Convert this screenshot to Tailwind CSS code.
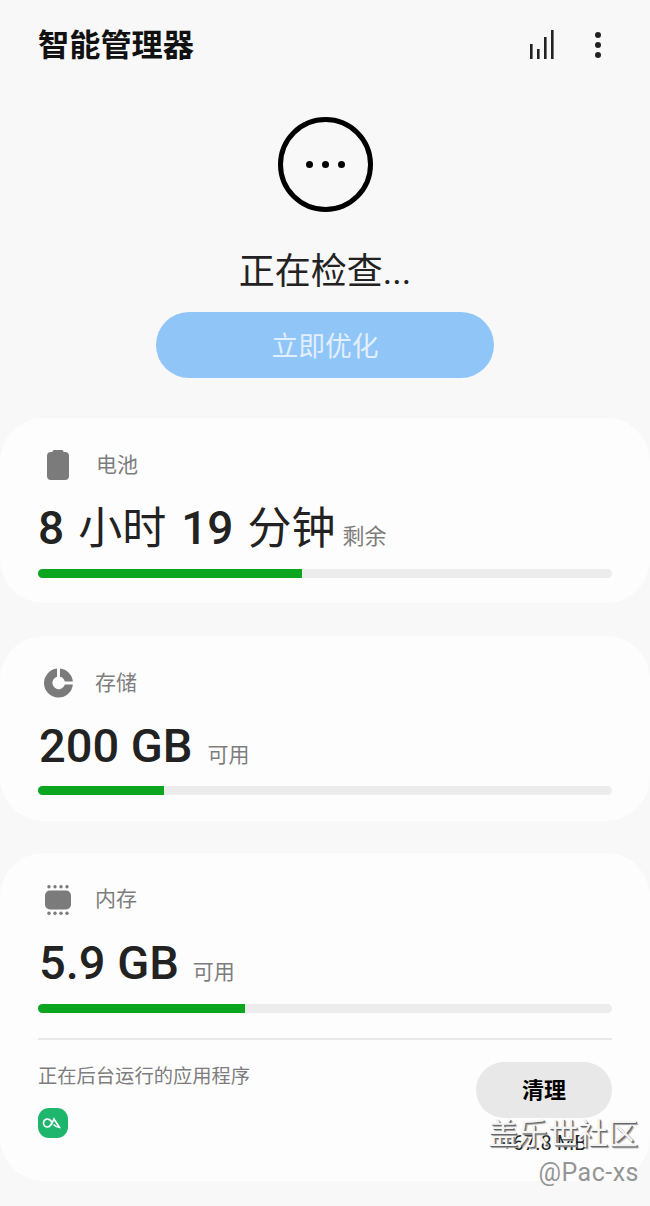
<!DOCTYPE html>
<html lang="zh-CN">
<head>
    <meta charset="UTF-8">
    <meta name="viewport" content="width=device-width, initial-scale=1.0">
    <title>智能管理器</title>
    <script src="https://cdn.jsdelivr.net/npm/@tailwindcss/browser@4"></script>
</head>
<body class="bg-[#f8f8f8] font-['Roboto','Noto_Sans_CJK_SC',sans-serif]">
    <div class="relative h-[1206px] w-[650px] overflow-hidden">
        <!-- Header -->
        <div class="flex h-[90px] items-start justify-between pl-[38px] pr-[47px] pt-[24px]">
            <h1 class="text-[31.2px] leading-[44px] font-bold text-[#111]">智能管理器</h1>
            <div class="flex items-start gap-[39px] pt-[6px]">
                <svg class="h-[30px] w-[26px]" viewBox="0 0 26 30" fill="#222">
                    <rect x="2" y="14" width="2.6" height="15"/>
                    <rect x="9" y="19" width="2.6" height="10"/>
                    <rect x="16" y="7" width="2.6" height="22"/>
                    <rect x="23" y="0" width="2.6" height="29"/>
                </svg>
                <svg class="h-[30px] w-[10px]" viewBox="0 0 10 30" fill="#222">
                    <circle cx="5" cy="5" r="3"/>
                    <circle cx="5" cy="15" r="3"/>
                    <circle cx="5" cy="25" r="3"/>
                </svg>
            </div>
        </div>

        <!-- Status -->
        <div class="flex flex-col items-center">
            <div class="mt-[27px] flex h-[95px] w-[95px] items-center justify-center gap-[9px] rounded-full border-[5px] border-black">
                <span class="h-[7px] w-[7px] rounded-full bg-black"></span>
                <span class="h-[7px] w-[7px] rounded-full bg-black"></span>
                <span class="h-[7px] w-[7px] rounded-full bg-black"></span>
            </div>
            <p class="mt-[35px] text-[36px] leading-[50px] text-[#222]">正在检查...</p>
            <button class="mt-[15px] h-[66px] w-[338px] rounded-full bg-[#90c5f8] pt-[5px] text-[26.8px] text-[#e2effd]">立即优化</button>
        </div>

        <!-- Cards -->
        <div class="mt-[40px] flex flex-col">
            <section class="mb-[33px] h-[185px] rounded-[44px] bg-[#fdfdfd] px-[38px] pt-[31px]">
                <div class="flex h-[32px] items-center">
                    <svg class="ml-[9px] h-[30px] w-[22px]" viewBox="0 0 22 30" fill="#7b7b7b">
                        <path d="M7 0h8a1.500 1.500 0 0 1 1.500 1.500V2H18a4 4 0 0 1 4 4v20a4 4 0 0 1-4 4H4a4 4 0 0 1-4-4V6a4 4 0 0 1 4-4h1.500v-.5A1.500 1.500 0 0 1 7 0z"/>
                    </svg>
                    <span class="ml-[27px] pt-[2px] text-[21px] text-[#7d7d7d]">电池</span>
                </div>
                <div class="mt-[13px] flex h-[50px] items-baseline text-[#222]">
                    <span class="text-[46px] font-medium">8</span>
                    <span class="ml-[14px] text-[44px]">小时</span>
                    <span class="ml-[15px] text-[46px] font-medium">19</span>
                    <span class="ml-[14px] text-[44px]">分钟</span>
                    <span class="ml-[7px] text-[22px] text-[#7d7d7d]">剩余</span>
                </div>
                <div class="mt-[25px] h-[9px] overflow-hidden rounded-full bg-[#ececec]">
                    <div class="h-full w-[264px] bg-[#0ba520]"></div>
                </div>
            </section>

            <section class="mb-[32px] h-[185px] rounded-[44px] bg-[#fdfdfd] px-[38px] pt-[31px]">
                <div class="flex h-[32px] items-center">
                    <svg class="ml-[6px] h-[30px] w-[29px]" viewBox="0 0 30 30" fill="#7b7b7b">
                        <path d="M13.500 .1v8.500a6.500 6.500 0 1 0 8 8h8.400A15 15 0 1 1 13.500 .1z"/>
                        <path d="M16.500 .1A15 15 0 0 1 29.900 13.500h-8.400a6.500 6.500 0 0 0-5-5z"/>
                    </svg>
                    <span class="ml-[22px] pt-[1px] text-[21px] text-[#7d7d7d]">存储</span>
                </div>
                <div class="mt-[12px] flex h-[50px] items-baseline text-[#222]">
                    <span class="ml-[1px] text-[47px] font-medium">200 GB</span>
                    <span class="ml-[15px] text-[21px] text-[#7d7d7d]">可用</span>
                </div>
                <div class="mt-[25px] h-[9px] overflow-hidden rounded-full bg-[#ececec]">
                    <div class="h-full w-[126px] bg-[#0ba520]"></div>
                </div>
            </section>

            <section class="h-[328px] rounded-[44px] bg-[#fdfdfd] px-[38px] pt-[31px]">
                <div class="flex h-[32px] items-center">
                    <svg class="ml-[6px] h-[30px] w-[28px]" viewBox="0 0 28 30" fill="#7b7b7b">
                        <rect x="1" y="5.500" width="26" height="19" rx="5"/>
                        <circle cx="5" cy="1.700" r="1.700"/><circle cx="11" cy="1.700" r="1.700"/><circle cx="17" cy="1.700" r="1.700"/><circle cx="23" cy="1.700" r="1.700"/>
                        <circle cx="5" cy="28.300" r="1.700"/><circle cx="11" cy="28.300" r="1.700"/><circle cx="17" cy="28.300" r="1.700"/><circle cx="23" cy="28.300" r="1.700"/>
                    </svg>
                    <span class="ml-[23px] text-[21px] text-[#7d7d7d]">内存</span>
                </div>
                <div class="mt-[12px] flex h-[50px] items-baseline text-[#222]">
                    <span class="ml-[1px] text-[47px] font-medium">5.9 GB</span>
                    <span class="ml-[14px] text-[21px] text-[#7d7d7d]">可用</span>
                </div>
                <div class="mt-[26px] h-[9px] overflow-hidden rounded-full bg-[#ececec]">
                    <div class="h-full w-[207px] bg-[#0ba520]"></div>
                </div>
                <div class="mt-[25px] border-t-2 border-[#e8e8e8]"></div>
                <div class="flex justify-between pt-[22px]">
                    <div>
                        <p class="text-[19.3px] leading-[30px] text-[#7d7d7d]">正在后台运行的应用程序</p>
                        <svg class="mt-[16px] h-[30px] w-[30px]" viewBox="0 0 30 30">
                            <rect width="30" height="30" rx="11" fill="#1eb56d"/>
                            <path d="M14.500 15c-1.500-2.500-3-4-5-4a4 4 0 0 0 0 8c3 0 4.500-3.500 6.500-8l5.500 8.500c-2 0-4-1-6-3" fill="none" stroke="#fff" stroke-width="1.700"/>
                        </svg>
                    </div>
                    <div class="flex flex-col items-center">
                        <button class="h-[56px] w-[136px] rounded-full bg-[#e8e8e8] text-[22px] font-bold text-black">清理</button>
                        <span class="mt-[13px] text-[20px] leading-[24px] text-[#222]">+67.8 MB</span>
                    </div>
                </div>
            </section>
        </div>

        <!-- Watermark -->
        <div class="absolute right-[12px] top-[1117px] text-right">
            <p class="text-[30px] leading-[34px] text-[#f4f4f4] [text-shadow:1px_1px_0_#666,2px_2px_1px_#999]">盖乐世社区</p>
        </div>
        <div class="absolute right-[11px] top-[1158px] text-[25px] leading-[30px] tracking-[0.5px] text-[#959595]">@Pac-xs</div>
    </div>
</body>
</html>
